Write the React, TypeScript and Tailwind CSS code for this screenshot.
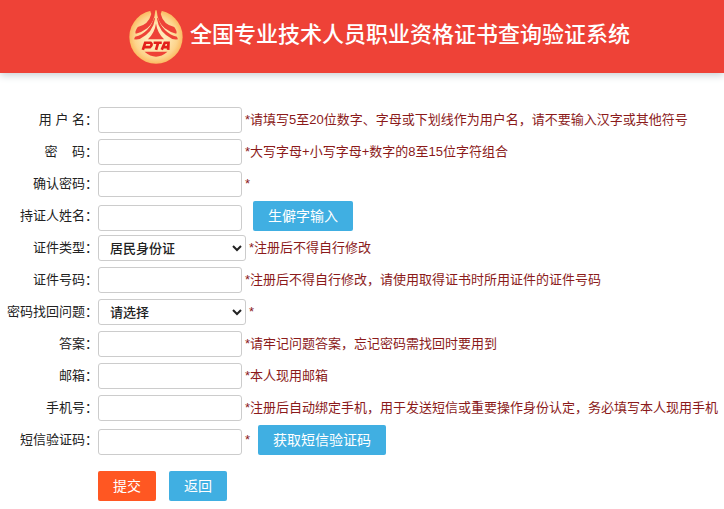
import type { ReactNode } from 'react';

const hintClass = 'whitespace-nowrap text-[13px] leading-5 text-[#8b1a1a]';
const boxClass = 'h-[26px] rounded-[3px] border border-[#ccc] bg-white';
const buttonClass =
  'h-[30px] shrink-0 whitespace-nowrap rounded-[2px] px-[15px] text-sm text-white';

const Logo = () => (
  <svg viewBox="0 0 160 160" className="size-[54px] shrink-0" aria-hidden="true">
    <defs>
      <radialGradient id="gold">
        <stop offset="0.4" stopColor="#ffe9b8" />
        <stop offset="0.8" stopColor="#fdd48c" />
        <stop offset="1" stopColor="#fbbb62" />
      </radialGradient>
    </defs>
    <circle cx="80" cy="80" r="79" fill="url(#gold)" />
    <g fill="#ee4237">
      <path d="M62 0H78Q76 36 54 54Q38 66 20 70Q16 64 26 50Q58 44 66 12Z" />
      <path d="M98 0H82Q84 36 106 54Q122 66 140 70Q144 64 134 50Q102 44 94 12Z" />
      <path d="M77 26Q72 66 32 86Q24 88 15 87L18 79Q60 68 75 22Z" />
      <path d="M83 26Q88 66 128 86Q136 88 145 87L142 79Q100 68 85 22Z" />
      <path d="M80 40Q76 68 56 87H104Q84 68 80 40Z" />
      <path d="M46 124H114Q80 153 46 124Z" />
    </g>
    <g fill="none" stroke="#e3201b" strokeWidth="8">
      <path d="M41 118L48 97H64Q71 103 62 110H46" />
      <path d="M73 97H97M86 98L80 118" />
      <path d="M97 118L106 97H117L116 118M102 110H116" />
    </g>
  </svg>
);

type RowProps = { label: string; id: string; children: ReactNode; withButton?: boolean };

const Row = ({ label, id, children, withButton }: RowProps) => (
  <div className="flex h-8">
    <label
      htmlFor={id}
      className="w-[98px] shrink-0 whitespace-pre pt-1.5 text-right text-[13px] leading-5 text-[#222]"
    >
      {label}
    </label>
    <div className={withButton ? 'flex items-end pb-px' : 'flex items-center'}>{children}</div>
  </div>
);

type FieldProps = { label: string; id: string; hint: string; type?: string };

const TextField = ({ label, id, hint, type = 'text' }: FieldProps) => (
  <Row label={label} id={id}>
    <input id={id} name={id} type={type} className={`${boxClass} w-36 px-2 text-[13px]`} />
    <span className={`${hintClass} ml-[3px]`}>{hint}</span>
  </Row>
);

const SelectField = ({ label, id, hint, options }: FieldProps & { options: string[] }) => (
  <Row label={label} id={id}>
    <select
      id={id}
      name={id}
      className={`${boxClass} w-[148px] pl-[7px] text-[13px] font-medium text-[#222]`}
    >
      {options.map((option) => (
        <option key={option}>{option}</option>
      ))}
    </select>
    <span className={`${hintClass} ml-[3px]`}>{hint}</span>
  </Row>
);

export default function App() {
  return (
    <div className="bg-white font-['Liberation_Sans','Noto_Sans_CJK_SC',sans-serif]" lang="zh-CN">
      <header className="flex h-[73px] items-center justify-center gap-[7px] bg-[#ee4237] pr-[60px] pl-[95px] shadow-[0_2px_8px_#c5cdd2]">
        <Logo />
        <h1 className="whitespace-nowrap pb-1 text-[22px] font-medium text-white">
          全国专业技术人员职业资格证书查询验证系统
        </h1>
      </header>
      <form className="pt-[31px]" onSubmit={(e) => e.preventDefault()}>
        <TextField
          label="用 户 名："
          id="username"
          hint="*请填写5至20位数字、字母或下划线作为用户名，请不要输入汉字或其他符号"
        />
        <TextField
          label="密    码："
          id="password"
          type="password"
          hint="*大写字母+小写字母+数字的8至15位字符组合"
        />
        <TextField label="确认密码：" id="confirm" type="password" hint="*" />
        <Row label="持证人姓名：" id="realname" withButton>
          <input id="realname" name="realname" className={`${boxClass} w-36 px-2 text-[13px]`} />
          <button type="button" className={`${buttonClass} ml-[11px] bg-[#40afe2]`}>
            生僻字输入
          </button>
        </Row>
        <SelectField
          label="证件类型："
          id="idtype"
          hint="*注册后不得自行修改"
          options={['居民身份证', '护照']}
        />
        <TextField
          label="证件号码："
          id="idnumber"
          hint="*注册后不得自行修改，请使用取得证书时所用证件的证件号码"
        />
        <SelectField label="密码找回问题：" id="question" hint="*" options={['请选择']} />
        <TextField label="答案：" id="answer" hint="*请牢记问题答案，忘记密码需找回时要用到" />
        <TextField label="邮箱：" id="email" type="email" hint="*本人现用邮箱" />
        <TextField
          label="手机号："
          id="phone"
          type="tel"
          hint="*注册后自动绑定手机，用于发送短信或重要操作身份认定，务必填写本人现用手机"
        />
        <Row label="短信验证码：" id="smscode" withButton>
          <input id="smscode" name="smscode" className={`${boxClass} w-36 px-2 text-[13px]`} />
          <span className={`${hintClass} ml-[3px] self-center`}>*</span>
          <button type="button" className={`${buttonClass} ml-2 bg-[#40afe2]`}>
            获取短信验证码
          </button>
        </Row>
        <div className="mt-[15px] flex gap-[13px] pb-2 pl-[98px]">
          <button type="submit" className={`${buttonClass} bg-[#ff5722]`}>
            提交
          </button>
          <button type="button" className={`${buttonClass} bg-[#40afe2]`}>
            返回
          </button>
        </div>
      </form>
    </div>
  );
}
